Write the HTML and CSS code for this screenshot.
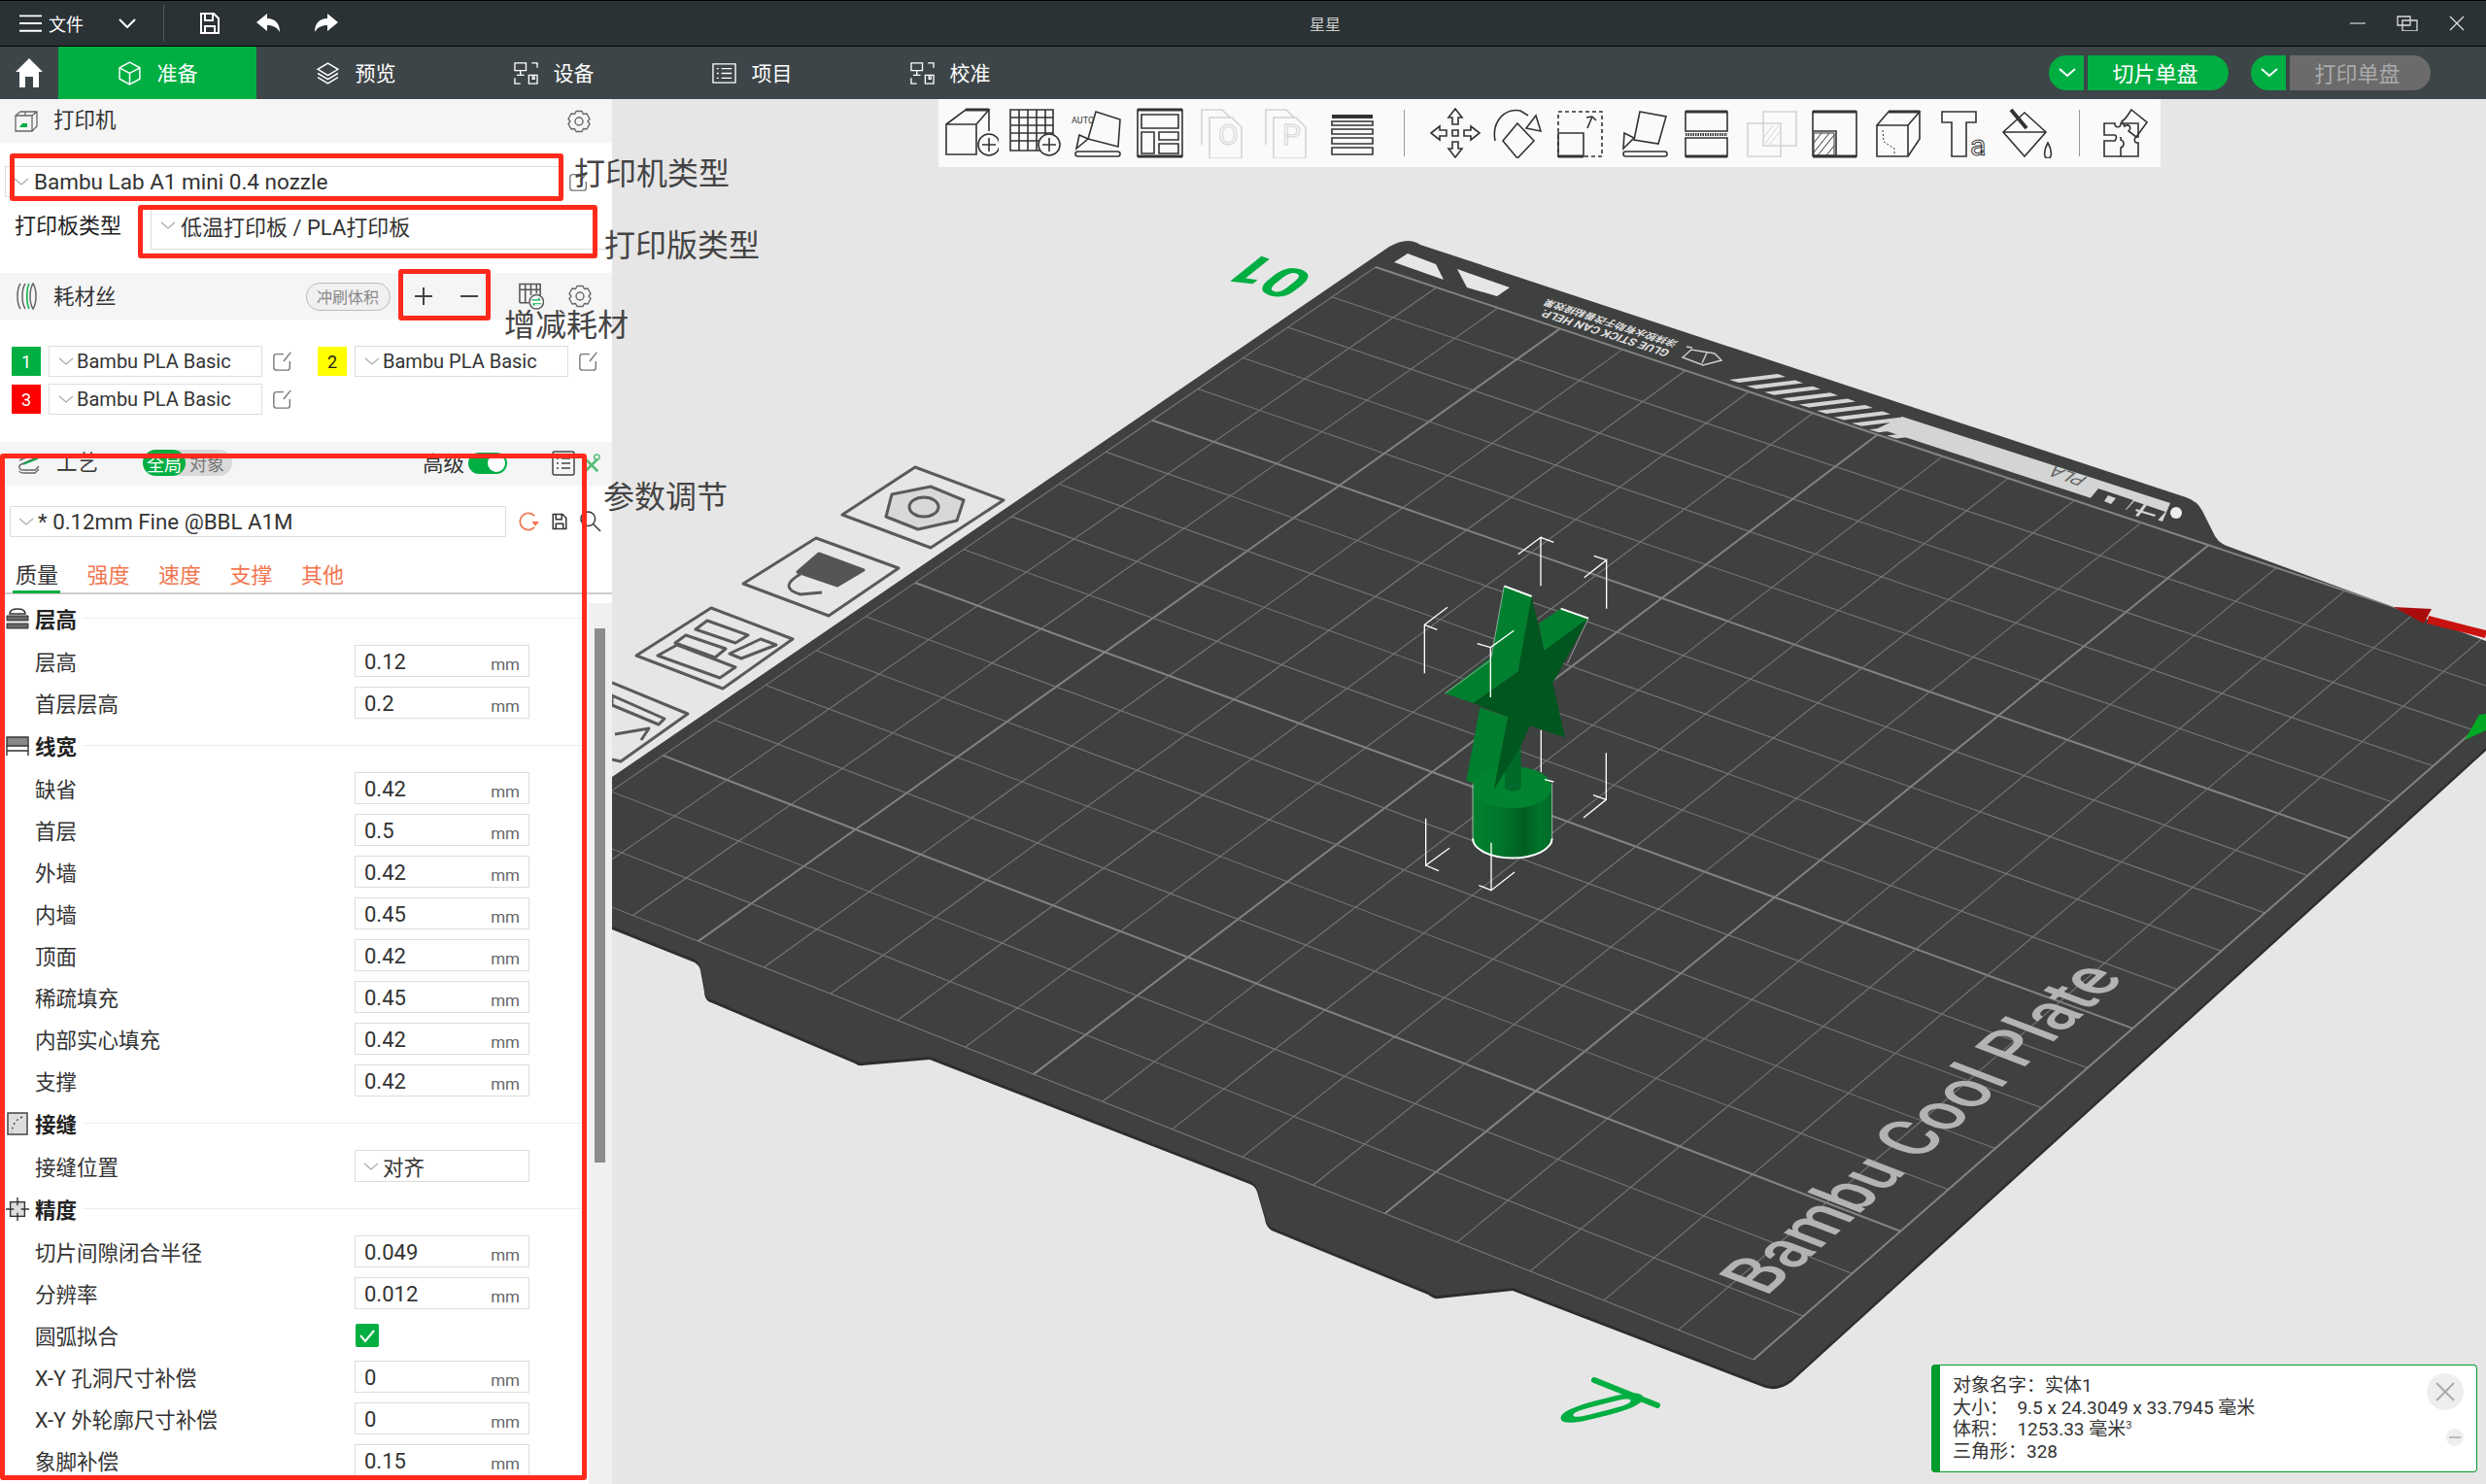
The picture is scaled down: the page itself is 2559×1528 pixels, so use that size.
FILE: index.html
```html
<!DOCTYPE html>
<html lang="zh">
<head>
<meta charset="utf-8">
<title>星星</title>
<link rel="stylesheet" href="styles.css">
</head>
<body>
<svg class="sprite" width="0" height="0">
  <defs>
    <symbol id="chev" viewBox="0 0 16 8"><path d="M1 1 8 7 15 1" fill="none" stroke="#aaa" stroke-width="1.2"/></symbol>
    <symbol id="edit" viewBox="0 0 24 24"><path d="M20 12v7a3 3 0 0 1-3 3H5a3 3 0 0 1-3-3V7a3 3 0 0 1 3-3h8M21 2l-8 10" fill="none" stroke="#777" stroke-width="1.5"/></symbol>
    <symbol id="gear" viewBox="0 0 24 24"><path d="M9 1.500h6l1.500 3 3.500-.5 3 5.500-2 2.500 2 2.500-3 5.500-3.500-.5-1.500 3H9l-1.500-3-3.500.5-3-5.500 2-2.500-2-2.500 3-5.500 3.500.5z" fill="none" stroke="#666" stroke-width="1.4" stroke-linejoin="round"/><circle cx="12" cy="12" r="4" fill="none" stroke="#666" stroke-width="1.4"/></symbol>
    <symbol id="save" viewBox="0 0 24 24"><path d="M3 2h13l5 5v15H3zM7 2v7h8V2M7 22v-7h10v7" fill="none" stroke="currentColor" stroke-width="2"/></symbol>
  </defs>
</svg>
<div class="app">
  <header class="titlebar">
    <div class="tb-left">
      <svg class="ic-burger" viewBox="0 0 24 20"><path d="M0 2h24M0 10h24M0 18h24" stroke="#fff" stroke-width="2"/></svg>
      <span class="tb-file">文件</span>
      <svg class="ic-tbchev" viewBox="0 0 18 10"><path d="M1 1l8 8 8-8" fill="none" stroke="#fff" stroke-width="2"/></svg>
      <i class="tb-sep"></i>
      <svg class="ic-tbsave"><use href="#save"/></svg>
      <svg class="ic-arrow" viewBox="0 0 24 20"><path d="M0 9 11 0v5c8 0 13 5 13 14-3-5-7-7-13-7v6z" fill="#fff"/></svg>
      <svg class="ic-arrow" viewBox="0 0 24 20"><path d="M24 9 13 0v5C5 5 0 10 0 19c3-5 7-7 13-7v6z" fill="#fff"/></svg>
    </div>
    <div class="tb-title">星星</div>
    <div class="tb-right">
      <svg class="ic-win" viewBox="0 0 22 16"><path d="M3 8h16" stroke="#ccc" stroke-width="1.300"/></svg>
      <svg class="ic-win" viewBox="0 0 22 16"><path d="M1 1h13v9H1zM6 5h15v11H6z" fill="none" stroke="#ddd" stroke-width="1.300"/></svg>
      <svg class="ic-win" viewBox="0 0 22 16"><path d="M4 1l14 14M18 1 4 15" stroke="#ddd" stroke-width="1.300"/></svg>
    </div>
  </header>

  <nav class="navbar">
    <div class="home"><svg viewBox="0 0 28 30"><path d="M14 0 28 14h-4v16h-6V19h-8v11H4V14H0z" fill="#fff"/></svg></div>
    <div class="tab tab-on"><svg viewBox="0 0 24 24"><path d="M12 1 22 6.500v11L12 23 2 17.500v-11zM2 6.500 12 12l10-5.500M12 12v11" fill="none" stroke="#fff" stroke-width="1.400"/></svg><span>准备</span></div>
    <div class="tab"><svg viewBox="0 0 24 24"><path d="M12 2 22 8 12 14 2 8zM2 12l10 6 10-6M2 16l10 6 10-6" fill="none" stroke="#fff" stroke-width="1.400"/></svg><span>预览</span></div>
    <div class="tab"><svg viewBox="0 0 26 24"><path d="M1 1h12v8H1zM7 9v5M3 14h8M19 1h6v5M1 17v6h6M16 14h9v9h-9zM20 14v4h2v-4" fill="none" stroke="#fff" stroke-width="1.400"/></svg><span>设备</span></div>
    <div class="tab"><svg viewBox="0 0 26 24"><path d="M1 2h24v20H1zM5 7h2M10 7h11M5 12h2M10 12h11M5 17h2M10 17h11" fill="none" stroke="#fff" stroke-width="1.400"/></svg><span>项目</span></div>
    <div class="tab"><svg viewBox="0 0 26 24"><path d="M1 1h12v8H1zM7 9v5M3 14h8M19 1h6v5M1 17v6h6M16 14h9v9h-9zM20 14v4h2v-4" fill="none" stroke="#fff" stroke-width="1.400"/></svg><span>校准</span></div>
    <div class="actions">
      <div class="btn-group">
        <div class="btn-chev"><svg viewBox="0 0 18 10"><path d="M1 1l8 7 8-7" fill="none" stroke="#fff" stroke-width="2"/></svg></div>
        <div class="btn-main">切片单盘</div>
      </div>
      <div class="btn-group">
        <div class="btn-chev"><svg viewBox="0 0 18 10"><path d="M1 1l8 7 8-7" fill="none" stroke="#fff" stroke-width="2"/></svg></div>
        <div class="btn-main btn-off">打印单盘</div>
      </div>
    </div>
  </nav>

  <main class="main">
    <aside class="panel">
      <div class="head head-printer">
        <svg class="head-ic" viewBox="0 0 24 22"><path d="M1 5h17v16H1zM1 5l5-4h17v15l-5 5M18 5l5-4M11 1v4" fill="none" stroke="#666" stroke-width="1.300"/><path d="M5 17l3-4h5v4z" fill="#00ae42"/></svg>
        <span class="head-title">打印机</span>
        <svg class="head-gear"><use href="#gear"/></svg>
      </div>
      <div class="printer-row">
        <div class="select select-printer"><svg class="chev"><use href="#chev"/></svg><span>Bambu Lab A1 mini 0.4 nozzle</span></div>
        <svg class="edit"><use href="#edit"/></svg>
      </div>
      <div class="plate-row">
        <span class="plate-label">打印板类型</span>
        <div class="select select-plate"><svg class="chev"><use href="#chev"/></svg><span>低温打印板 / PLA打印板</span></div>
      </div>
      <div class="head head-filament">
        <svg class="head-ic head-ic-fil" viewBox="0 0 22 30"><path d="M4 2C0 8 0 22 4 28M9 2C5 8 5 22 9 28" fill="none" stroke="#666" stroke-width="1.500"/><path d="M13 2C10 8 10 22 13 28" fill="none" stroke="#00ae42" stroke-width="1.500"/><path d="M17 2c4 6 4 20 0 26-4-6-4-20 0-26z" fill="none" stroke="#666" stroke-width="1.500"/></svg>
        <span class="head-title">耗材丝</span>
        <span class="flush">冲刷体积</span>
        <span class="sq"><svg viewBox="0 0 20 20"><path d="M10 1v18M1 10h18" stroke="#444" stroke-width="2"/></svg></span>
        <span class="sq"><svg viewBox="0 0 20 20"><path d="M1 10h18" stroke="#444" stroke-width="2"/></svg></span>
        <svg class="fil-table" viewBox="0 0 28 30"><path d="M2 22V2h22v12M2 8h22M8 2v20M14 2v12M20 2v10M2 22h10" fill="none" stroke="#555" stroke-width="1.600"/><circle cx="20" cy="21" r="7.500" fill="#fff" stroke="#555" stroke-width="1.500"/><path d="M15 19h9M24 19l-2-2M25 23h-9M16 23l2 2" fill="none" stroke="#00ae42" stroke-width="1.200"/></svg>
        <svg class="head-gear head-gear-fil"><use href="#gear"/></svg>
      </div>
      <div class="filaments">
        <div class="fil"><span class="swatch sw-green">1</span><div class="select select-fil"><svg class="chev"><use href="#chev"/></svg><span>Bambu PLA Basic</span></div><svg class="edit"><use href="#edit"/></svg></div>
        <div class="fil"><span class="swatch sw-yellow">2</span><div class="select select-fil"><svg class="chev"><use href="#chev"/></svg><span>Bambu PLA Basic</span></div><svg class="edit"><use href="#edit"/></svg></div>
        <div class="fil"><span class="swatch sw-red">3</span><div class="select select-fil"><svg class="chev"><use href="#chev"/></svg><span>Bambu PLA Basic</span></div><svg class="edit"><use href="#edit"/></svg></div>
      </div>
      <div class="head head-process">
        <svg class="head-ic" viewBox="0 0 24 22"><path d="M2 8 16 2l6 2M2 13l18-8M2 13v2c0 2 2 3 4 3h12l4-4M2 19c0 1 2 2 4 2h12l4-4" fill="none" stroke="#666" stroke-width="1.400"/><path d="M6 12 21 6" stroke="#00ae42" stroke-width="1.600"/></svg>
        <span class="head-title">工艺</span>
        <span class="scope"><b>全局</b><i>对象</i></span>
        <span class="adv">高级</span>
        <span class="toggle"><i></i></span>
        <svg class="list-ic" viewBox="0 0 24 26"><path d="M3 1h18a2 2 0 0 1 2 2v20a2 2 0 0 1-2 2H3a2 2 0 0 1-2-2V3a2 2 0 0 1 2-2zM5 8h2M10 8h9M5 13h2M10 13h9M5 18h2M10 18h9" fill="none" stroke="#444" stroke-width="1.500"/></svg>
        <svg class="wrench-ic" viewBox="0 0 22 22"><path d="M2 3l17 17M5 20 19 6" stroke="#59bf7a" stroke-width="3"/><circle cx="18" cy="4" r="3" fill="none" stroke="#59bf7a" stroke-width="1.600"/></svg>
      </div>
      <div class="profile-row">
        <div class="select select-profile"><svg class="chev"><use href="#chev"/></svg><span>* 0.12mm Fine @BBL A1M</span></div>
        <svg class="pf-ic" viewBox="0 0 22 22"><path d="M17 17a9 9 0 1 1 0-12" fill="none" stroke="#f2754e" stroke-width="1.800"/><path d="M22 11h-8l4 5z" fill="#f2754e"/></svg>
        <svg class="pf-ic pf-save"><use href="#save"/></svg>
        <svg class="pf-ic pf-search" viewBox="0 0 24 24"><circle cx="9" cy="9" r="8" fill="none" stroke="#333" stroke-width="1.600"/><path d="M15 15l8 8" stroke="#333" stroke-width="1.600"/></svg>
      </div>
      <div class="tabs">
        <span class="ptab ptab-on">质量</span><span class="ptab">强度</span><span class="ptab">速度</span><span class="ptab">支撑</span><span class="ptab">其他</span>
      </div>
      <div class="scroll">
        <div class="list">
          <div class="sec"><svg viewBox="0 0 24 24"><path d="M4 7c0-3 2-5 8-5s8 2 8 5H4z" fill="none" stroke="#333" stroke-width="1.500"/><path d="M1 9h22v5H1zM1 17h22v5H1z" fill="#666" stroke="#333"/></svg><b>层高</b><i></i></div>
          <div class="row"><label>层高</label><div class="input"><span>0.12</span><em>mm</em></div></div>
          <div class="row"><label>首层层高</label><div class="input"><span>0.2</span><em>mm</em></div></div>
          <div class="sec"><svg viewBox="0 0 24 24"><path d="M1 3h22v9H1z" fill="#888" stroke="#333" stroke-width="1.400"/><path d="M1 12v10M23 12v10M1 17h22" fill="none" stroke="#333" stroke-width="1.400"/></svg><b>线宽</b><i></i></div>
          <div class="row"><label>缺省</label><div class="input"><span>0.42</span><em>mm</em></div></div>
          <div class="row"><label>首层</label><div class="input"><span>0.5</span><em>mm</em></div></div>
          <div class="row"><label>外墙</label><div class="input"><span>0.42</span><em>mm</em></div></div>
          <div class="row"><label>内墙</label><div class="input"><span>0.45</span><em>mm</em></div></div>
          <div class="row"><label>顶面</label><div class="input"><span>0.42</span><em>mm</em></div></div>
          <div class="row"><label>稀疏填充</label><div class="input"><span>0.45</span><em>mm</em></div></div>
          <div class="row"><label>内部实心填充</label><div class="input"><span>0.42</span><em>mm</em></div></div>
          <div class="row"><label>支撑</label><div class="input"><span>0.42</span><em>mm</em></div></div>
          <div class="sec"><svg viewBox="0 0 24 24"><rect x="2" y="1" width="20" height="22" fill="#ddd" stroke="#444" stroke-width="1.500"/><path d="M17 5C10 8 7 13 6 21" fill="none" stroke="#444" stroke-width="1.400" stroke-dasharray="2 3"/></svg><b>接缝</b><i></i></div>
          <div class="row"><label>接缝位置</label><div class="select select-row"><svg class="chev"><use href="#chev"/></svg><span>对齐</span></div></div>
          <div class="sec"><svg viewBox="0 0 26 26"><rect x="5" y="5" width="16" height="16" fill="#ddd" stroke="#333" stroke-width="1.500"/><path d="M13 0v9M13 17v9M0 13h9M17 13h9" stroke="#333" stroke-width="1.500"/></svg><b>精度</b><i></i></div>
          <div class="row"><label>切片间隙闭合半径</label><div class="input"><span>0.049</span><em>mm</em></div></div>
          <div class="row"><label>分辨率</label><div class="input"><span>0.012</span><em>mm</em></div></div>
          <div class="row"><label>圆弧拟合</label><span class="check"><svg viewBox="0 0 24 24"><path d="M5 12l5 6 9-11" fill="none" stroke="#fff" stroke-width="2"/></svg></span></div>
          <div class="row"><label>X-Y 孔洞尺寸补偿</label><div class="input"><span>0</span><em>mm</em></div></div>
          <div class="row"><label>X-Y 外轮廓尺寸补偿</label><div class="input"><span>0</span><em>mm</em></div></div>
          <div class="row"><label>象脚补偿</label><div class="input"><span>0.15</span><em>mm</em></div></div>
        </div>
        <div class="track"><div class="thumb"></div></div>
      </div>
    </aside>

    <section class="stage">
      <svg class="scene" viewBox="630 102 1929 1426" preserveAspectRatio="none">
        <defs>
          <path id="plate" d="M1430 254Q1449 243 1462 252L2250 512Q2262 516 2267 526L2280 552Q2284 559 2292 562L2559 660V770L1844 1420Q1828 1432 1812 1424L1557 1326 1481 1334Q1476 1335 1470 1330L1309 1264Q1303 1260 1302 1252L1294 1224Q1292 1218 1286 1216L957 1088 888 1094Q884 1095 880 1092L729 1028Q725 1024 725 1018L721 996Q720 991 715 988L630 954V800Z"/>
          <clipPath id="plate-clip"><use href="#plate"/></clipPath>
          <linearGradient id="cyl" x1="0" x2="1" y1="0" y2="0">
            <stop offset="0" stop-color="#008230"/><stop offset=".35" stop-color="#00752b"/><stop offset=".65" stop-color="#005e23"/><stop offset=".85" stop-color="#00752b"/><stop offset="1" stop-color="#006a27"/>
          </linearGradient>
        </defs>
        <use href="#plate" fill="#2c2e2d" transform="translate(0 3)"/>
        <use href="#plate" fill="#3f4140"/>
        <path d="M1435 270 1449 261 1478 272 1486 288Z" fill="#e6e6e6"/>
        <path d="M1500 277 1554 296 1541 305 1510 296Z" fill="#e6e6e6"/>
        <g id="grid" clip-path="url(#plate-clip)"></g>
        <g id="stripes" fill="#d3d5d4"></g>
        <path d="M1958 429 2234 518 2226 537 1933 441Z" fill="#d3d5d4"/>
        <circle cx="2240" cy="528" r="6" fill="#eee"/>
        <path d="M2160 503 2196 515 2186 527 2150 515ZM2197 516 2229 527 2219 538 2187 527Z" fill="#3f4140"/>
        <path d="M2170 510l8 3-5 6-7-3zM2207 519l3 1-9 12-3-1zM2199 524l20 6-1 2-20-6z" fill="#d3d5d4"/>
        <text class="t-pla" transform="matrix(-.94 -.33 .7 -.6 2150 492)">PLA</text>
        <text class="t-glue" transform="matrix(-.95 -.31 .6 -.7 1720 361)">GLUE STICK CAN HELP.</text>
        <text class="t-glue t-glue-cn" transform="matrix(-.95 -.31 .6 -.7 1728 352)">涂抹胶水有助于改善粘接效果</text>
        <path d="M1732 368 1741 360 1765 364 1772 371 1753 376ZM1757 363 1752 374M1742 358 1736 357" fill="none" stroke="#ccc" stroke-width="1.500"/>
        <text class="t-plate" transform="matrix(.77 -.684 1.22 .47 1818 1335)">Bambu Cool Plate</text>
        <text class="t-01" transform="matrix(-1.19 -.42 .9 -.72 1356 284)">01</text>
        <path d="M1641 1421 1706 1447" stroke="#00ae42" stroke-width="6" stroke-linecap="round"/>
        <text class="t-0" transform="matrix(.15 .9 -2.9 .75 1606 1450)">0</text>

        <g class="plate-ic">
          <path d="M942 481 1033 515 958 564 867 530Z"/>
          <path class="pi-fill" d="M958 501 992 515 985 536 945 545 912 532 918 509Z"/>
          <ellipse cx="951" cy="522" rx="15" ry="10"/>
          <path d="M840 554 925 585 853 634 765 601Z"/>
          <path class="pi-dark" d="M843 570 889 587 862 603 821 589Z"/>
          <path d="M824 591Q800 605 824 612L846 610"/>
          <path d="M732 626 816 658 744 709 655 675Z"/>
          <path d="M697 664 757 687 741 698 677 675ZM728 639 770 654 757 662 716 648ZM706 654 747 668 736 677 695 662ZM783 658 799 664 763 678 751 673Z"/>
          <path d="M630 703 708 735 639 784 630 782"/>
          <path d="M630 716 684 740 678 746 630 726ZM633 756 668 750 660 762"/>
        </g>

        <path d="M2499 638 2559 653" stroke="#c8120f" stroke-width="8"/>
        <path d="M2464 625 2503 627 2495 642Z" fill="#a80d0c"/>
        <path d="M2537 762 2552 736 2559 735V752Z" fill="#00a823"/>

        <g transform="translate(1380 520) scale(.33333)">
          <path d="M505 250 590 282 548 515 410 612 322 582 465 470Z" fill="#007f2e"/>
          <path d="M680 320 765 350 628 450 612 365Z" fill="#007f2e"/>
          <path d="M430 625 517 655 473 880 388 852Z" fill="#007f2e"/>
          <path d="M408 870V1030A122 60 0 0 0 653 1030V870Z" fill="url(#cyl)"/>
          <ellipse cx="530" cy="872" rx="122" ry="65" fill="#008430"/>
          <path d="M507 735H557V870A25 14 0 0 1 507 870Z" fill="#01692a"/>
          <path d="M590 282 628 450 765 350 655 550 693 718 585 682 556 745 473 880 517 655 410 612 548 515Z" fill="#00561f"/>
          <path d="M408 1030A122 60 0 0 0 653 1030" fill="none" stroke="#fff" stroke-width="6"/>
          <path d="M408 860V1030M653 860V1030" stroke="#e6e6e6" stroke-width="2"/>
          <path d="M505 250 590 282M680 320 765 350" stroke="#fff" stroke-width="6"/>
          <path d="M322 582 465 478M505 250 465 470M765 350 700 490" stroke="#fff" stroke-width="1.500" fill="none"/>
          <g class="brk">
            <path d="M618 250V100L548 152M618 100 658 115"/>
            <path d="M821 320V170L752 224M821 170 782 157"/>
            <path d="M259 520V370L330 316M259 370 298 385"/>
            <path d="M463 594V440L535 388M463 440 422 428"/>
            <path d="M820 766V910L750 966M820 910 780 896"/>
            <path d="M619 695V825M630 848 658 855"/>
            <path d="M263 968V1113L336 1060M263 1113 303 1130"/>
            <path d="M465 1043V1190L537 1134M465 1190 427 1175"/>
          </g>
        </g>
      </svg>

      <div class="toolbar">
        <svg class="ti" viewBox="0 0 56 52"><path d="M2 17 22 2H46L33 17H2V48H33V17M46 2V24"/><path d="M22 2H46" class="th"/><circle cx="46" cy="38" r="11" class="bg"/><path d="M46 31V45M39 38H53"/></svg>
        <svg class="ti" viewBox="0 0 56 52"><path d="M2 2H46V44H2ZM2 10H46M2 18H46M2 26H46M2 34H46M11 2V44M20 2V44M29 2V44M38 2V44"/><circle cx="42" cy="38" r="11" class="bg"/><path d="M42 31V45M35 38H49"/></svg>
        <svg class="ti" viewBox="0 0 56 52"><text class="ti-auto" x="0" y="16">AUTO</text><path d="M25 4 50 12 48 40 17 32Z"/><path d="M8 28 17 32 5 42Z" class="bg"/><rect x="4" y="45" width="46" height="5" rx="2.500"/></svg>
        <svg class="ti" viewBox="0 0 56 52"><path d="M2 2H48V50H2Z"/><path d="M2 2H48M2 50H48" class="th"/><path d="M6 7H44V21H6ZM6 25H19V47H6ZM24 25H44V33H24ZM24 37H44V47H24Z"/></svg>
        <svg class="ti ti-off" viewBox="0 0 56 52"><path d="M3 38V2H24L33 11"/><path d="M11 10H34L44 20V52H11Z" class="bg"/><text class="ti-let" x="20" y="38">O</text></svg>
        <svg class="ti ti-off" viewBox="0 0 56 52"><path d="M3 38V2H24L33 11"/><path d="M11 10H34L44 20V52H11Z" class="bg"/><text class="ti-let" x="20" y="38">P</text></svg>
        <svg class="ti" viewBox="0 0 56 52"><path d="M5 9H47" class="th3"/><path d="M5 14H47V18H5ZM5 22H47V27H5ZM5 31H47V37H5ZM5 41H47V48H5Z"/></svg>
        <i class="ti-sep"></i>
        <svg class="ti" viewBox="0 0 56 52"><path d="M28 1 35 10H31V17H25V10H21ZM28 51 35 42H31V35H25V42H21ZM3 26 12 19V23H19V29H12V33ZM53 26 44 19V23H37V29H44V33ZM25 23H31V29H25Z"/></svg>
        <svg class="ti" viewBox="0 0 56 52"><path d="M27 16 44 34 27 52 12 34ZM4 34C0 12 16 0 30 3L38 8"/><path d="M36 21 51 24 46 8Z"/></svg>
        <svg class="ti" viewBox="0 0 56 52"><path d="M3 4H48V50H3Z" class="dash"/><path d="M3 26H29V50H3Z"/><path d="M3 50H29" class="th"/><path d="M33 21 38 9M38 9 42 13M38 9 32 10"/></svg>
        <svg class="ti" viewBox="0 0 56 52"><path d="M21 4 48 9 40 37 15 33Z"/><path d="M5 26 15 31 4 42Z"/><rect x="4" y="45" width="45" height="5" rx="2.500"/></svg>
        <svg class="ti" viewBox="0 0 56 52"><path d="M3 4H46V24H3ZM3 31H46V50H3Z"/><path d="M3 4H46M3 50H46" class="th"/><path d="M3 27.500H46" class="dots"/></svg>
        <svg class="ti ti-off" viewBox="0 0 56 52"><path d="M17 4H51V39H17Z"/><path d="M1 16H35V50H1Z"/><path d="M19 37 33 18M23 38 34 25M18 30 27 18" class="thin"/></svg>
        <svg class="ti" viewBox="0 0 56 52"><path d="M3 50V4H48V50H27V24H3"/><path d="M3 4H48M3 50H27M27 50H48" class="th"/><path d="M4 26H25V49H4ZM4 36 12 26M4 46 20 26M8 49 25 28M17 49 25 39" class="thin"/></svg>
        <svg class="ti" viewBox="0 0 56 52"><path d="M3 18 15 4H47L35 18H3V50H35V18M47 4V32L35 50"/><path d="M15 4H47" class="th"/><path d="M9 23 10 35 21 42 21 50" class="dots2"/></svg>
        <svg class="ti" viewBox="0 0 56 52"><path d="M4 4H39V15H29V50H14V15H4Z"/><text class="ti-a" x="33" y="49">a</text></svg>
        <svg class="ti" viewBox="0 0 56 52"><path d="M24 5 46 25 24 50 2 25ZM2 25H46"/><path d="M10 2 26 21" class="th3"/><path d="M48 36C44 43 43 52 48 52 53 52 52 43 48 36Z"/></svg>
        <i class="ti-sep"></i>
        <svg class="ti" viewBox="0 0 56 52"><path d="M2 16H13C12 21 20 21 19 16H37V30C32 29 32 36 37 36V50H2V34H13C15 31 15 29 13 28H2ZM19 50V41C23 40 23 34 19 33V30"/><path d="M30 2 46 15 35 30 27 24C31 20 27 16 23 19L20 14C24 12 26 8 30 2Z"/></svg>
      </div>

      <div class="card">
        <div class="card-text"><div>对象名字：实体1</div><div>大小：  9.5 x 24.3049 x 33.7945 毫米</div><div>体积：  1253.33 毫米<sup>3</sup></div><div>三角形：328</div></div>
        <div class="card-btns">
          <span class="card-x"><svg viewBox="0 0 24 24"><path d="M3 3 21 21M21 3 3 21" stroke="#aaa" stroke-width="2"/></svg></span>
          <span class="card-min"></span>
        </div>
      </div>
    </section>
  </main>

  <div class="rb rb1"></div><div class="rb rb2"></div><div class="rb rb3"></div><div class="rb rb4"></div>
  <div class="note n1">打印机类型</div>
  <div class="note n2">打印版类型</div>
  <div class="note n3">增减耗材</div>
  <div class="note n4">参数调节</div>
</div>
<script src="app.js"></script>
</body>
</html>
```
FILE: styles.css
```css
* { box-sizing: border-box; }
html, body { margin: 0; height: 100%; }
body { font-family: Roboto, "Noto Sans CJK SC", sans-serif; color: #333; background: #e6e6e6; overflow: hidden; }
.sprite { position: absolute; }
.app { position: relative; width: 2559px; height: 1528px; display: flex; flex-direction: column; }

.titlebar { height: 48px; flex: none; display: flex; align-items: center; background: #2b3235; border-top: 1px solid #000; border-bottom: 1px solid #000; }
.tb-left { width: 360px; display: flex; align-items: center; padding-left: 20px; }
.ic-burger { width: 23px; height: 20px; }
.tb-file { margin-left: 7px; color: #fff; font-size: 18px; width: 36px; }
.ic-tbchev { width: 18px; height: 10px; margin-left: 36px; }
.tb-sep { width: 1px; height: 38px; background: #555; margin-left: 28px; }
.ic-tbsave { width: 24px; height: 24px; margin-left: 35px; color: #fff; }
.ic-arrow { width: 24px; height: 20px; margin-left: 36px; }
.tb-title { flex: 1; text-align: center; color: #ccc; font-size: 16px; }
.tb-right { width: 191px; display: flex; gap: 29px; padding-left: 48px; }
.ic-win { width: 22px; height: 16px; }

.navbar { height: 54px; flex: none; display: flex; align-items: stretch; background: #3d4548; }
.home { width: 60px; display: flex; align-items: center; padding-left: 16px; }
.home svg { width: 28px; height: 30px; }
.tab { width: 204px; display: flex; align-items: center; justify-content: center; gap: 16px; color: #fff; font-size: 21px; }
.tab svg { width: 25px; height: 25px; }
.tab span { margin-bottom: 3px; }
.tab-on { background: #00ae42; }
.actions { margin-left: auto; display: flex; align-items: center; gap: 23px; padding-right: 57px; }
.btn-group { display: flex; gap: 4px; height: 36px; }
.btn-chev { width: 36px; background: #00ae42; border-radius: 18px 0 0 18px; display: flex; align-items: center; justify-content: center; padding-left: 2px; }
.btn-chev svg { width: 18px; height: 10px; }
.btn-main { width: 145px; background: #00ae42; border-radius: 0 18px 18px 0; color: #fff; font-size: 22px; display: flex; align-items: center; justify-content: center; padding: 0 6px 3px 0; }
.btn-off { background: #6b6b6b; color: #aaa; }

.main { flex: 1; display: flex; min-height: 0; }
.panel { width: 630px; flex: none; background: #fff; overflow: hidden; display: flex; flex-direction: column; font-size: 21.500px; }
.stage { flex: 1; position: relative; background: #e6e6e6; }
.scene { display: block; width: 100%; height: 100%; }

.head { display: flex; align-items: center; background: #f5f5f5; flex: none; }
.head > * { flex: none; }
.head-printer { height: 45px; padding-left: 15px; }
.head-filament { height: 48px; margin-top: 24px; padding-left: 17px; }
.head-process { height: 45px; margin-top: 27px; padding: 0 0 2px 18px; }
.head-ic { width: 24px; height: 22px; }
.head-ic-fil { width: 22px; height: 30px; }
.head-title { margin: 0 0 4px 16px; color: #333; white-space: nowrap; }
.head-printer .head-title { margin-bottom: 6px; }
.head-gear { width: 24px; height: 24px; margin-left: auto; margin-right: 22px; }
.head-gear-fil { margin-left: 25px; margin-right: 23px; }
.flush { margin-left: 195px; width: 87px; height: 29px; border: 1px solid #bbb; border-radius: 14px; background: #f0f0f0; color: #888; font-size: 16px; display: flex; align-items: center; justify-content: center; }
.sq { width: 24px; height: 24px; margin-left: 24px; display: flex; align-items: center; }
.sq svg { width: 20px; height: 20px; }
.sq + .sq { margin-left: 23px; }
.fil-table { width: 27px; height: 30px; margin-left: 36px; }

.select { display: flex; align-items: center; background: #fff; border: 1px solid #ddd; white-space: nowrap; color: #333; }
.chev { width: 16px; height: 8px; flex: none; margin: 0 5px 0 9px; }
.printer-row { display: flex; align-items: center; padding: 24px 0 0 5px; }
.select-printer { width: 572px; height: 32px; font-size: 22.500px; }
.select-printer .chev { margin: 0 5px 0 8px; }
.edit { width: 22px; height: 24px; margin-left: 8px; flex: none; }
.plate-row { display: flex; align-items: flex-start; padding: 11px 0 0 15px; }
.plate-label { width: 140px; height: 38px; line-height: 38px; color: #222; font-size: 22px; }
.select-plate { width: 475px; height: 43px; padding-bottom: 6px; border-top: 0; border-right: 0; font-size: 22px; }
.filaments { display: grid; grid-template-columns: 315px 315px; row-gap: 7px; padding: 27px 0 0 12px; height: 126px; flex: none; align-content: start; }
.filaments + .head-process { margin-top: 0; }
.fil { display: flex; align-items: center; }
.swatch { width: 30px; height: 30px; display: flex; align-items: center; justify-content: center; font-size: 18px; color: #fff; flex: none; }
.sw-green { background: #00ae42; }
.sw-yellow { background: #ffff00; color: #222; }
.sw-red { background: #ff0000; }
.select-fil { width: 220px; height: 32px; margin-left: 8px; font-size: 20px; }
.select-fil .chev { margin: 0 3px 0 9px; }
.fil .edit { margin-left: 10px; }

.scope { margin-left: 46px; width: 92px; height: 27px; background: #d9d9d9; border-radius: 14px; display: flex; align-items: center; font-size: 18px; }
.scope b { width: 44px; height: 27px; background: #00ae42; color: #fff; font-weight: 400; border-radius: 14px; display: flex; align-items: center; justify-content: center; }
.scope i { font-style: normal; color: #777; padding-left: 4px; }
.adv { margin: 0 0 3px 196px; }
.toggle { margin-left: 4px; width: 40px; height: 22px; background: #00ae42; border-radius: 11px; display: flex; justify-content: flex-end; align-items: center; padding-right: 2px; }
.toggle i { width: 18px; height: 18px; border-radius: 50%; background: #fff; }
.list-ic { width: 24px; height: 26px; margin-left: 46px; }
.wrench-ic { width: 20px; height: 22px; margin-left: 6px; }

.profile-row { display: flex; align-items: center; padding: 21px 0 0 10px; flex: none; }
.select-profile { width: 511px; height: 32px; font-size: 22.300px; }
.select-profile .chev { margin: 0 4px 0 8px; }
.pf-ic { width: 21px; height: 22px; margin-left: 13px; flex: none; color: #333; }
.pf-save { width: 18px; height: 20px; margin-left: 12px; }
.pf-search { width: 22px; height: 22px; margin-left: 12px; }

.tabs { display: flex; gap: 24.500px; padding: 25px 0 0 13px; border-bottom: 2px solid #ccc; flex: none; height: 59px; }
.ptab { padding: 0 3px; width: 49px; height: 33px; line-height: 30px; color: #f2754e; border-bottom: 3px solid transparent; white-space: nowrap; font-size: 22px; }
.ptab-on { color: #333; border-bottom-color: #00ae42; }

.scroll { flex: 1; display: flex; min-height: 0; }
.list { flex: 1; padding: 2px 5px 0 0; min-width: 0; overflow: hidden; }
.track { width: 24px; margin-top: 9px; background: #f0f0f0; flex: none; padding: 26px 0 0 6px; }
.thumb { width: 11px; height: 550px; background: #8c8c8c; }
.sec { height: 45px; display: flex; align-items: center; padding-left: 6px; }
.sec svg { width: 24px; height: 24px; flex: none; }
.sec b { margin-left: 6px; color: #222; }
.sec i { flex: 1; height: 1px; background: #eee; margin-left: 6px; }
.row { height: 43px; display: flex; align-items: center; padding-left: 36px; }
.row label { width: 329px; flex: none; color: #333; white-space: nowrap; }
.input { width: 180px; height: 33px; border: 1px solid #ddd; display: flex; align-items: center; justify-content: space-between; padding: 0 9px; font-size: 22px; color: #333; }
.input span { margin-top: 2px; }
.input em { font-style: normal; font-size: 17px; color: #666; padding-top: 6px; }
.select-row { width: 180px; height: 33px; }
.select-row .chev { margin: 0 4px 0 8px; }
.check { width: 24px; height: 24px; margin-left: 1px; background: #00ae42; border-radius: 2px; display: flex; }
.check svg { width: 24px; height: 24px; }

.toolbar { position: absolute; left: 336px; top: 0; height: 70px; background: #fafafa; display: flex; align-items: center; gap: 9.600px; padding: 0 4px 0 6px; }
.ti { width: 56px; height: 52px; flex: none; fill: none; stroke: #333; stroke-width: 1.600; }
.ti-off { stroke: #d4d4d4; }
.ti .bg { fill: #fafafa; }
.ti .th { stroke-width: 3; }
.ti .th3 { stroke-width: 4; }
.ti .thin { stroke-width: 1; }
.ti .dash { stroke-dasharray: 4 3; }
.ti .dots { stroke-width: 3; stroke-dasharray: 1.500 1; }
.ti .dots2 { stroke-width: 1; stroke-dasharray: 2 2; }
.ti-auto { font-size: 9px; fill: #333; stroke: none; }
.ti-let { font-size: 30px; fill: none; stroke: #d4d4d4; stroke-width: 1; }
.ti-a { font-size: 30px; fill: none; stroke: #333; stroke-width: 1; }
.ti-sep { width: 1px; height: 48px; background: #999; margin: 0 14px; flex: none; }

.t-plate { font-size: 60px; font-weight: 500; fill: #b3b3b3; }
.t-01 { font-size: 50px; font-weight: 700; fill: #00ae42; }
.t-0 { font-size: 40px; font-weight: 700; fill: #00ae42; }
.t-pla { font-size: 20px; fill: #666; }
.t-glue { font-size: 13px; font-weight: 700; fill: #ddd; }
.t-glue-cn { font-size: 11px; }
.plate-ic { fill: none; stroke: #5a5a5a; stroke-width: 3; stroke-linejoin: round; }
.plate-ic .pi-fill { fill: #d8d8d8; }
.plate-ic .pi-dark { fill: #555; stroke: #555; }
.brk { fill: none; stroke: #fff; stroke-width: 4; }

.card { position: absolute; left: 1358px; top: 1303px; width: 562px; height: 111px; background: #fff; border: 1px solid #009a2d; border-left-width: 9px; border-radius: 4px; display: flex; justify-content: space-between; padding: 10px 13px 0 13px; }
.card-text { font-size: 19px; line-height: 22.700px; color: #333; white-space: pre; }
.card-text sup { font-size: 11px; line-height: 0; }
.card-btns { display: flex; flex-direction: column; align-items: flex-end; padding-top: 2px; }
.card-x { width: 38px; height: 38px; border-radius: 50%; background: #eee; display: flex; align-items: center; justify-content: center; margin-top: -4px; }
.card-x svg { width: 24px; height: 24px; }
.card-min { width: 18px; height: 18px; border-radius: 50%; background: #eee; margin: 19px 0 0 0; position: relative; }
.card-min::after { content: ""; position: absolute; left: 3px; right: 3px; top: 8px; height: 2px; background: #bbb; }

.rb { position: absolute; border: 5px solid #ff2a1c; border-radius: 3px; pointer-events: none; }
.rb1 { left: 10px; top: 158px; width: 570px; height: 49px; }
.rb2 { left: 142px; top: 211px; width: 473px; height: 55px; }
.rb3 { left: 410px; top: 277px; width: 95px; height: 53px; }
.rb4 { left: 0; top: 467px; width: 604px; height: 1057px; }
.note { position: absolute; font-size: 32px; line-height: 44px; color: #444; white-space: nowrap; }
.n1 { left: 591px; top: 157px; }
.n2 { left: 622px; top: 231px; }
.n3 { left: 519px; top: 313px; }
.n4 { left: 621px; top: 490px; }
```
FILE: app.js
```js
(function () {
  var NS = 'http://www.w3.org/2000/svg';
  var A = [1416, 275], B = [2629, 680], C = [1805, 1400], D = [519, 890];
  var dx1 = B[0] - C[0], dx2 = D[0] - C[0], sx = A[0] - B[0] + C[0] - D[0];
  var dy1 = B[1] - C[1], dy2 = D[1] - C[1], sy = A[1] - B[1] + C[1] - D[1];
  var den = dx1 * dy2 - dx2 * dy1;
  var g = (sx * dy2 - dx2 * sy) / den, h = (dx1 * sy - sx * dy1) / den;
  var a = B[0] - A[0] + g * B[0], b = D[0] - A[0] + h * D[0];
  var d = B[1] - A[1] + g * B[1], e = D[1] - A[1] + h * D[1];
  function map(u, v) {
    var w = g * u + h * v + 1;
    return [(a * u + b * v + A[0]) / w, (d * u + e * v + A[1]) / w];
  }
  var grid = document.getElementById('grid');
  function line(p, q, heavy) {
    var l = document.createElementNS(NS, 'line');
    l.setAttribute('x1', p[0]); l.setAttribute('y1', p[1]);
    l.setAttribute('x2', q[0]); l.setAttribute('y2', q[1]);
    l.setAttribute('stroke', heavy ? '#828382' : '#767776');
    l.setAttribute('stroke-width', heavy ? 2 : 1.1);
    grid.appendChild(l);
  }
  for (var i = 0; i <= 18; i++) {
    var t = i / 18;
    line(map(t, 0), map(t, 1), i === 3 || i === 8 || i === 13 || i === 18);
    line(map(0, t), map(1, t), i === 5 || i === 10 || i === 15 || i === 0);
  }
  var stripes = document.getElementById('stripes');
  for (var k = 0; k < 10; k++) {
    var x = 1780 + k * 18, y = 386 + k * 6.4;
    var s = document.createElementNS(NS, 'path');
    s.setAttribute('d', 'M' + x + ' ' + (y + 5) + 'L' + (x + 50) + ' ' + (y - 1) + 'L' + (x + 58) + ' ' + (y + 2) + 'L' + (x + 10) + ' ' + (y + 8) + 'Z');
    stripes.appendChild(s);
  }
})();
```
